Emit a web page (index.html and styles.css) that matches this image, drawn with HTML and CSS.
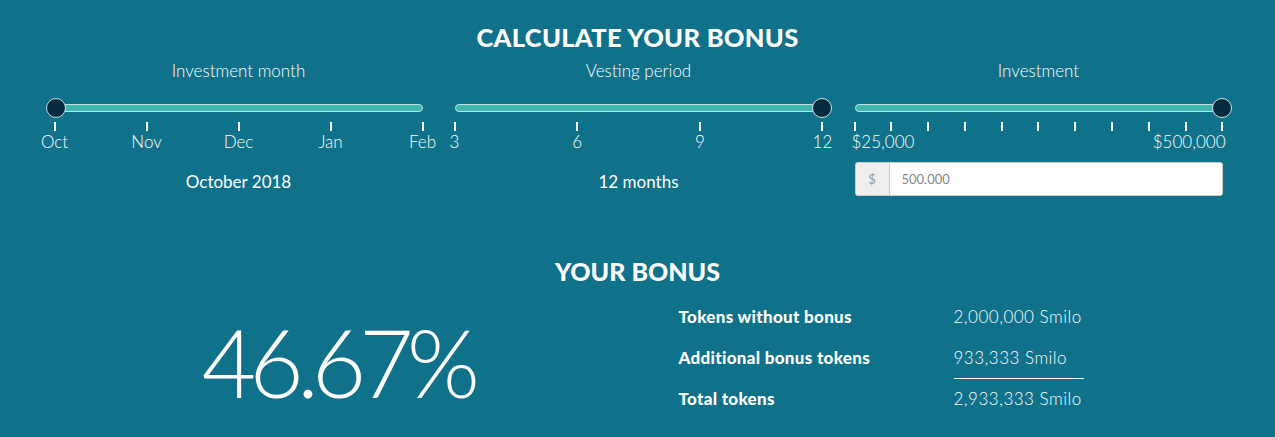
FILE: index.html
```html
<!DOCTYPE html>
<html>
  <head>
    <meta name="viewport" content="width=device-width,initial-scale=1.0">
    <title>Bonus calculator</title>
    <link rel="stylesheet" href="styles.css">
  </head>
  <body>
    <div class="calc">
      <h2 class="title">CALCULATE YOUR BONUS</h2>
      <div class="sliders">
        <div class="slider-col">
          <div class="slider-label">Investment month</div>
          <div class="track"><span class="knob" style="left: 0%"></span></div>
          <div class="ticks">
            <div class="tick"><i></i><span>Oct</span></div>
            <div class="tick"><i></i><span>Nov</span></div>
            <div class="tick"><i></i><span>Dec</span></div>
            <div class="tick"><i></i><span>Jan</span></div>
            <div class="tick"><i></i><span>Feb</span></div>
          </div>
          <div class="slider-value">October 2018</div>
        </div>
        <div class="slider-col">
          <div class="slider-label">Vesting period</div>
          <div class="track"><span class="knob" style="left: 100%"></span></div>
          <div class="ticks">
            <div class="tick"><i></i><span>3</span></div>
            <div class="tick"><i></i><span>6</span></div>
            <div class="tick"><i></i><span>9</span></div>
            <div class="tick"><i></i><span>12</span></div>
          </div>
          <div class="slider-value">12 months</div>
        </div>
        <div class="slider-col">
          <div class="slider-label">Investment</div>
          <div class="track"><span class="knob" style="left: 100%"></span></div>
          <div class="ticks">
            <div class="tick"><i></i></div>
            <div class="tick"><i></i></div>
            <div class="tick"><i></i></div>
            <div class="tick"><i></i></div>
            <div class="tick"><i></i></div>
            <div class="tick"><i></i></div>
            <div class="tick"><i></i></div>
            <div class="tick"><i></i></div>
            <div class="tick"><i></i></div>
            <div class="tick"><i></i></div>
            <div class="tick"><i></i></div>
          </div>
          <div class="range-labels">
            <span>$25,000</span>
            <span>$500,000</span>
          </div>
          <div class="money-input">
            <span class="addon">$</span>
            <input type="text" value="500.000">
          </div>
        </div>
      </div>

      <h2 class="subtitle">YOUR BONUS</h2>
      <div class="result">
        <div class="percent">46.67%</div>
        <div class="tokens-wrap">
          <table class="tokens">
            <tr>
              <th>Tokens without bonus</th>
              <td>2,000,000 Smilo</td>
            </tr>
            <tr>
              <th>Additional bonus tokens</th>
              <td class="sum-line">933,333 Smilo</td>
            </tr>
            <tr>
              <th>Total tokens</th>
              <td>2,933,333 Smilo</td>
            </tr>
          </table>
        </div>
      </div>
    </div>
  </body>
</html>
```

FILE: styles.css
```css
body {
  margin: 0;
  background: #10718b;
  color: #fff;
  font-family: Lato, "Open Sans", sans-serif;
  height: 437px;
  overflow: hidden;
}

.calc { width: 1200px; margin: 0 auto; }

.title {
  margin: 0;
  padding-top: 22px;
  text-align: center;
  font-size: 25.5px;
  font-weight: 900;
  line-height: 30px;
  letter-spacing: 0.3px;
}

.sliders { display: flex; margin-top: 9px; }
.slider-col { width: 400px; box-sizing: border-box; padding: 0 15px 0 17px; }

.slider-label {
  text-align: center;
  font-size: 17px;
  font-weight: 300;
  line-height: 20px;
}

.track {
  position: relative;
  margin-top: 23px;
  height: 6px;
  background: #40b8ad;
  border: 1px solid #b9e6e1;
  border-radius: 5px;
}
.knob {
  position: absolute;
  top: -7px;
  width: 18px;
  height: 18px;
  margin-left: -10px;
  border-radius: 50%;
  background: #062a40;
  border: 1px solid #c9e4ea;
}

.ticks { display: flex; justify-content: space-between; margin-top: 10px; }
.tick {
  width: 0;
  display: flex;
  flex-direction: column;
  align-items: center;
}
.tick i { display: block; width: 2px; height: 9px; background: #fff; flex: none; }
.tick span {
  margin-top: 1px;
  font-size: 17px;
  font-weight: 300;
  line-height: 20px;
  white-space: nowrap;
}

.range-labels {
  display: flex;
  justify-content: space-between;
  margin: 1px -3px 0;
  font-size: 17px;
  font-weight: 300;
  line-height: 20px;
}

.slider-value {
  margin-top: 19px;
  text-align: center;
  font-size: 17px;
  line-height: 22px;
}

.money-input {
  display: flex;
  margin-top: 10px;
  height: 34px;
  background: #fff;
  border: 1px solid #ccc;
  border-radius: 3px;
  box-sizing: border-box;
  overflow: hidden;
}
.addon {
  width: 33px;
  background: #eee;
  border-right: 1px solid #ccc;
  color: #999;
  font-size: 13px;
  display: flex;
  align-items: center;
  justify-content: center;
}
.money-input input {
  flex: 1;
  border: none;
  padding: 0 12px;
  font-family: inherit;
  font-size: 13px;
  color: #888;
  outline: none;
}

.subtitle {
  margin: 61px 0 0;
  text-align: center;
  font-size: 25px;
  font-weight: 900;
  line-height: 28px;
}

.result { display: flex; }
.percent {
  width: 600px;
  text-align: center;
  font-size: 94px;
  font-weight: 300;
  letter-spacing: -7px;
  line-height: 100px;
  padding-top: 27px;
}
.tokens-wrap { width: 600px; padding: 11px 0 0 41px; box-sizing: border-box; }
.tokens { border-collapse: collapse; }
.tokens th {
  text-align: left;
  font-size: 17px;
  font-weight: 900;
  letter-spacing: 0.3px;
  width: 275px;
  padding: 0;
  height: 41px;
}
.tokens td {
  font-size: 17px;
  font-weight: 300;
  letter-spacing: 0.5px;
  padding: 0;
  width: 130px;
}
.tokens td.sum-line { border-bottom: 1px solid #fff; }
```
